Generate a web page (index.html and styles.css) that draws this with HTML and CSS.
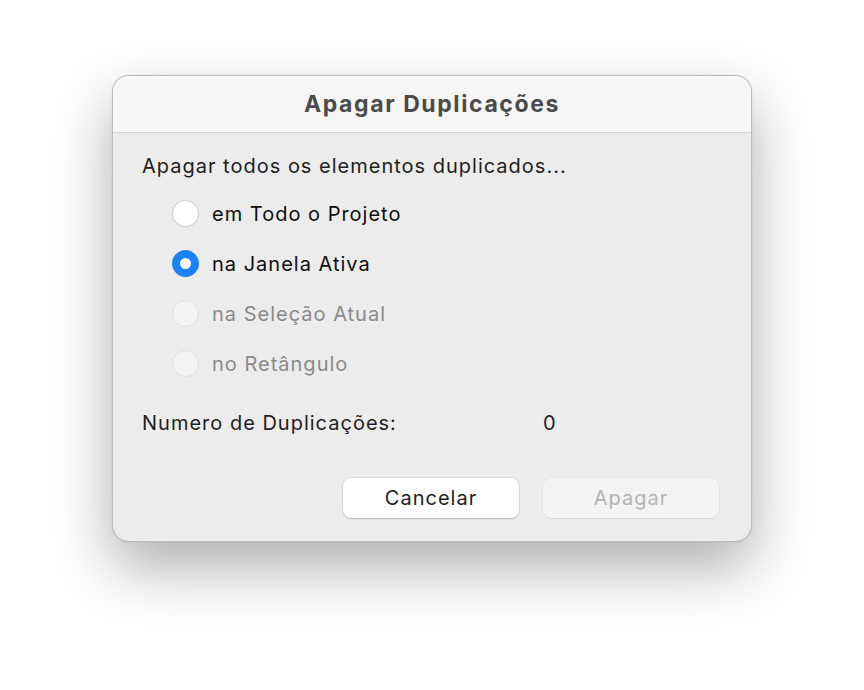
FILE: index.html
```html
<!DOCTYPE html>
<html lang="pt">
<head>
<meta charset="utf-8">
<title>Apagar Duplicações</title>
<link rel="stylesheet" href="styles.css">
</head>
<body>
<div class="dialog">
  <div class="titlebar"><span class="title">Apagar Duplicações</span></div>
  <div class="content">
    <div class="intro">Apagar todos os elementos duplicados...</div>
    <div class="options">
      <div class="option"><span class="radio"></span><span class="label">em Todo o Projeto</span></div>
      <div class="option"><span class="radio checked"></span><span class="label">na Janela Ativa</span></div>
      <div class="option disabled"><span class="radio"></span><span class="label">na Seleção Atual</span></div>
      <div class="option disabled"><span class="radio"></span><span class="label">no Retângulo</span></div>
    </div>
    <div class="count"><span class="count-label">Numero de Duplicações:</span><span class="count-value">0</span></div>
    <div class="buttons">
      <button class="btn">Cancelar</button>
      <button class="btn btn-disabled">Apagar</button>
    </div>
  </div>
</div>
</body>
</html>
```
FILE: styles.css
```css
html, body {
  margin: 0;
  padding: 0;
  background: #ffffff;
}
body {
  padding: 75px 0 0 112px;
  font-family: Inter, "Noto Sans", sans-serif;
  height: 690px;
  box-sizing: border-box;
  overflow: hidden;
}
.dialog {
  width: 640px;
  height: 467px;
  box-sizing: border-box;
  border: 1px solid #bcbcbc;
  border-radius: 17px;
  background: #ececec;
  overflow: hidden;
  box-shadow: 0 26px 60px rgba(0,0,0,0.32), 0 0 1px rgba(0,0,0,0.2);
  display: flex;
  flex-direction: column;
}
.titlebar {
  height: 56px;
  flex: none;
  background: #f6f6f6;
  border-bottom: 1px solid #d4d4d4;
  display: flex;
  align-items: center;
  justify-content: center;
}
.title {
  font-size: 23px;
  letter-spacing: 1.6px;
  font-weight: 700;
  color: #4b4b4b;
  margin-top: 0;
}
.content {
  padding: 20px 31px 0 29px;
  display: flex;
  flex-direction: column;
  color: #1e1e1e;
  font-size: 20px;
  letter-spacing: 1px;
}
.intro {
  height: 26px;
  line-height: 26px;
}
.options {
  display: flex;
  flex-direction: column;
  padding-left: 30px;
  margin-top: 9px;
}
.option {
  display: flex;
  align-items: center;
  height: 50px;
  gap: 13px;
}
.label {
  color: #0e0e0e;
  padding-top: 1px;
}
.radio {
  width: 27px;
  height: 27px;
  box-sizing: border-box;
  border-radius: 50%;
  background: #ffffff;
  border: 1px solid #cfcfcf;
  box-shadow: 0 0.5px 1px rgba(0,0,0,0.08);
  display: flex;
  align-items: center;
  justify-content: center;
  flex: none;
}
.radio.checked {
  background: #1a82fb;
  border-color: #1a7cf0;
}
.radio.checked::after {
  content: "";
  width: 11px;
  height: 11px;
  border-radius: 50%;
  background: #ffffff;
}
.option.disabled .radio {
  background: #f2f2f2;
  border-color: #dedede;
  box-shadow: none;
}
.option.disabled .label {
  color: #8a8a8a;
}
.count {
  display: flex;
  align-items: center;
  height: 26px;
  margin-top: 22px;
}
.count-label {
  width: 401px;
}
.buttons {
  display: flex;
  justify-content: flex-end;
  gap: 24px;
  margin-top: 42px;
  padding-right: 1px;
}
.btn {
  width: 176px;
  height: 40px;
  border-radius: 8px;
  border: none;
  background: #ffffff;
  font-family: Inter, "Noto Sans", sans-serif;
  font-size: 20px;
  letter-spacing: 1px;
  color: #1e1e1e;
  box-shadow: 0 0 0 0.5px rgba(0,0,0,0.12), 0 1px 1.5px rgba(0,0,0,0.18);
  padding: 0;
}
.btn-disabled {
  background: #f3f3f3;
  color: #b3b3b3;
  box-shadow: 0 0 0 0.5px rgba(0,0,0,0.06), 0 0.5px 1px rgba(0,0,0,0.06);
}
```
